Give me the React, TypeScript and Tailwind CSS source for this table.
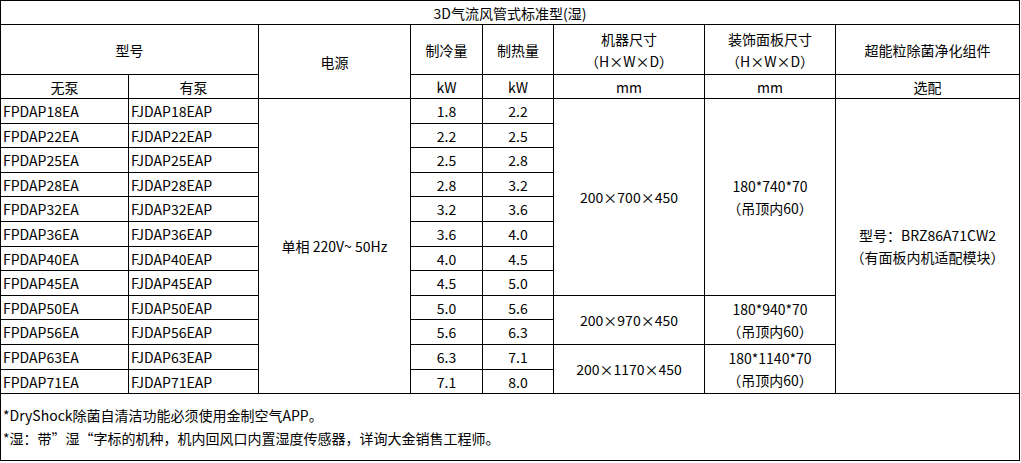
const rows = [
  ['FPDAP18EA', 'FJDAP18EAP', '1.8', '2.2'],
  ['FPDAP22EA', 'FJDAP22EAP', '2.2', '2.5'],
  ['FPDAP25EA', 'FJDAP25EAP', '2.5', '2.8'],
  ['FPDAP28EA', 'FJDAP28EAP', '2.8', '3.2'],
  ['FPDAP32EA', 'FJDAP32EAP', '3.2', '3.6'],
  ['FPDAP36EA', 'FJDAP36EAP', '3.6', '4.0'],
  ['FPDAP40EA', 'FJDAP40EAP', '4.0', '4.5'],
  ['FPDAP45EA', 'FJDAP45EAP', '4.5', '5.0'],
  ['FPDAP50EA', 'FJDAP50EAP', '5.0', '5.6'],
  ['FPDAP56EA', 'FJDAP56EAP', '5.6', '6.3'],
  ['FPDAP63EA', 'FJDAP63EAP', '6.3', '7.1'],
  ['FPDAP71EA', 'FJDAP71EAP', '7.1', '8.0'],
];

const heights = ['h-[25px]', 'h-[24px]', 'h-[25px]', 'h-[24px]', 'h-[25px]', 'h-[25px]', 'h-[24px]', 'h-[25px]', 'h-[24px]', 'h-[25px]', 'h-[25px]', 'h-[24px]'];

// merged size cells: start row -> [rowSpan, unit size, panel size]
const sizeGroups: Record<number, [number, string, string]> = {
  0: [8, '200×700×450', '180*740*70'],
  8: [2, '200×970×450', '180*940*70'],
  10: [2, '200×1170×450', '180*1140*70'],
};

const cell = 'border border-black p-0 text-center align-middle font-normal';

export default function App() {
  return (
    <div className="bg-white text-black text-[14px] leading-[22px]" style={{ fontFamily: '"Noto Sans CJK SC", "Noto Sans", sans-serif' }}>
      <table className="w-[1019px] table-fixed border-collapse">
        <colgroup>
          <col className="w-[128px]" />
          <col className="w-[130px]" />
          <col className="w-[152px]" />
          <col className="w-[72px]" />
          <col className="w-[71px]" />
          <col className="w-[151px]" />
          <col className="w-[131px]" />
          <col className="w-[184px]" />
        </colgroup>
        <thead>
          <tr className="h-[24px]">
            <th colSpan={8} className={cell}>3D气流风管式标准型(湿)</th>
          </tr>
          <tr className="h-[50px]">
            <th colSpan={2} className={cell}>型号</th>
            <th rowSpan={2} className={cell}>电源</th>
            <th className={cell}>制冷量</th>
            <th className={cell}>制热量</th>
            <th className={cell}>机器尺寸<br />（H×W×D）</th>
            <th className={cell}>装饰面板尺寸<br />（H×W×D）</th>
            <th className={cell}>超能粒除菌净化组件</th>
          </tr>
          <tr className="h-[24px]">
            <th className={cell}>无泵</th>
            <th className={cell}>有泵</th>
            <th className={cell}>kW</th>
            <th className={cell}>kW</th>
            <th className={cell}>mm</th>
            <th className={cell}>mm</th>
            <th className={cell}>选配</th>
          </tr>
        </thead>
        <tbody>
          {rows.map((r, i) => {
            const group = sizeGroups[i];
            return (
              <tr key={r[0]} className={heights[i]}>
                <td className={`${cell} text-left pl-[2px]`}>{r[0]}</td>
                <td className={`${cell} text-left pl-[2px]`}>{r[1]}</td>
                {i === 0 && <td rowSpan={12} className={cell}>单相 220V~ 50Hz</td>}
                <td className={cell}>{r[2]}</td>
                <td className={cell}>{r[3]}</td>
                {group && <td rowSpan={group[0]} className={cell}>{group[1]}</td>}
                {group && (
                  <td rowSpan={group[0]} className={cell}>
                    {group[2]}
                    <br />（吊顶内60）
                  </td>
                )}
                {i === 0 && (
                  <td rowSpan={12} className={cell}>
                    型号：BRZ86A71CW2
                    <br />（有面板内机适配模块）
                  </td>
                )}
              </tr>
            );
          })}
          <tr className="h-[67px]">
            <td colSpan={8} className={`${cell} text-left pl-[2px] leading-[23px]`}>
              *DryShock除菌自清洁功能必须使用金制空气APP。
              <br />*湿：带”湿“字标的机种，机内回风口内置湿度传感器，详询大金销售工程师。
            </td>
          </tr>
        </tbody>
      </table>
    </div>
  );
}
